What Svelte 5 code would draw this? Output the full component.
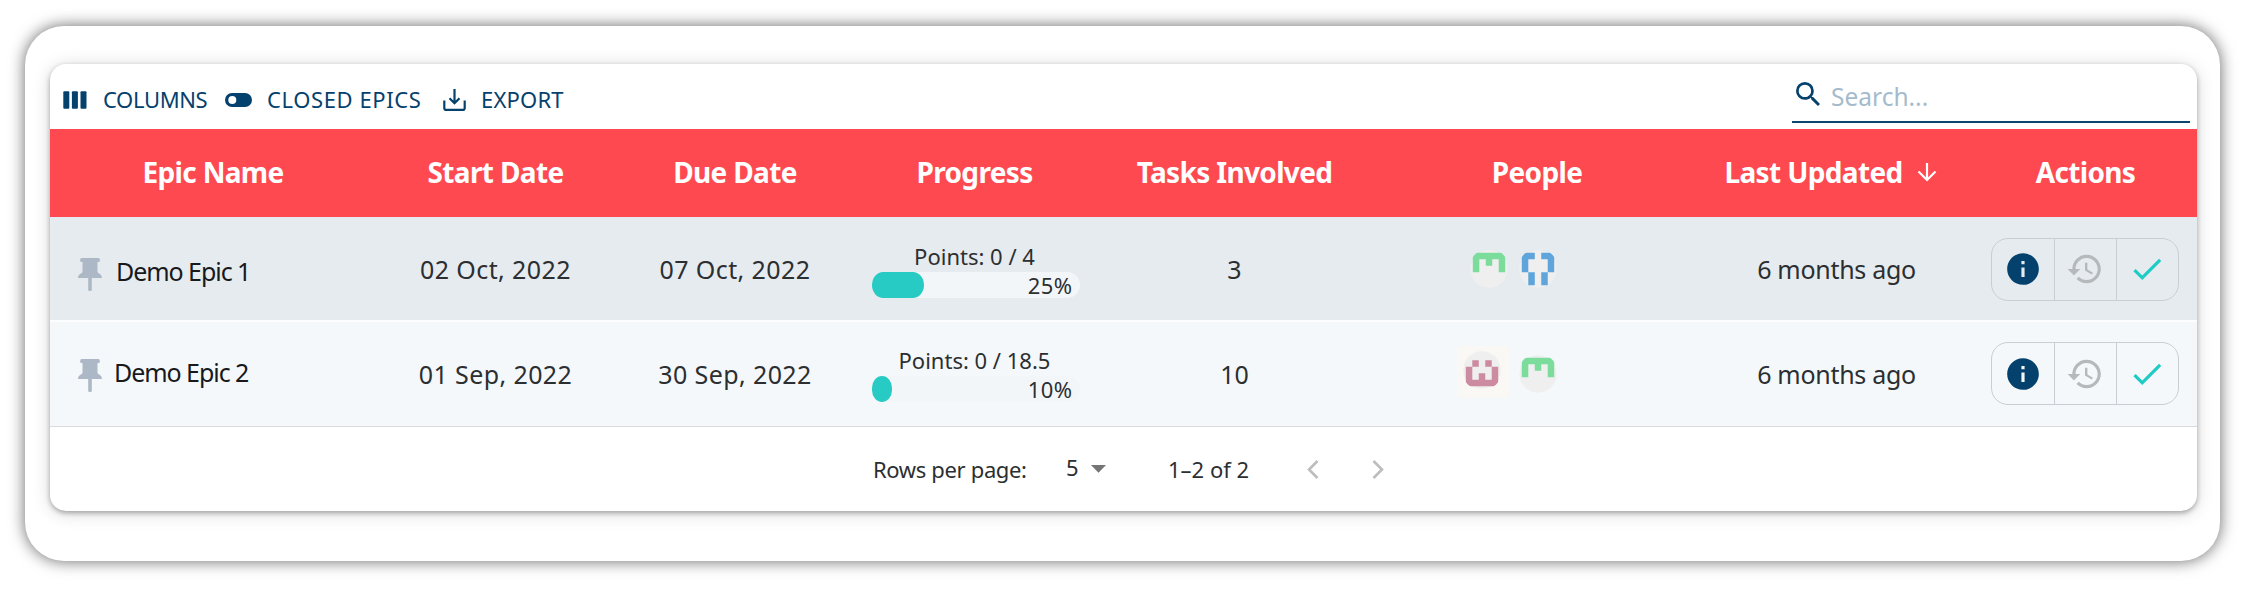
<script lang="ts">
  const columns = ['Epic Name', 'Start Date', 'Due Date', 'Progress', 'Tasks Involved', 'People', 'Last Updated', 'Actions'];

  // Identicons are 5x5 grids, '1' marks a filled cell
  const green = { color: '#7bdc9b', tinted: false, cells: ['11111', '10101', '10001', '00000', '00000'] };
  const blue = { color: '#5fa5dc', tinted: false, cells: ['11011', '10001', '10001', '01010', '01010'] };
  const pink = { color: '#cc8ba0', tinted: true, cells: ['00000', '01010', '10001', '10101', '11111'] };

  let epics = [
    { name: 'Demo Epic 1', start: '02 Oct, 2022', due: '07 Oct, 2022', points: '0 / 4', percent: 25, tasks: 3, people: [green, blue], updated: '6 months ago' },
    { name: 'Demo Epic 2', start: '01 Sep, 2022', due: '30 Sep, 2022', points: '0 / 18.5', percent: 10, tasks: 10, people: [pink, green], updated: '6 months ago' }
  ];

  function cellPath(cells: string[]) {
    let d = '';
    cells.forEach((line, y) => {
      [...line].forEach((cell, x) => {
        if (cell === '1') d += `M${2.8 + x * 6.48} ${2.8 + y * 6.48}h6.5v6.5h-6.5z`;
      });
    });
    return d;
  }
</script>

<div class="page">
  <div class="frame">
    <div class="card">
      <div class="toolbar">
        <div class="tools">
          <button class="tool columns">
            <svg width="24" height="18" viewBox="0 0 24 18" fill="currentColor">
              <rect x="0.300" y="0.300" width="6" height="17.400" rx="1" />
              <rect x="8.900" y="0.300" width="6" height="17.400" rx="1" />
              <rect x="17.500" y="0.300" width="6" height="17.400" rx="1" />
            </svg>
            COLUMNS
          </button>
          <button class="tool closed">
            <svg width="27" height="14" viewBox="0 0 27 14"><path fill-rule="evenodd" d="M7 0h13a7 7 0 0 1 0 14H7A7 7 0 0 1 7 0zm0.300 3a4 4 0 1 0 0 8 4 4 0 0 0 0-8z" fill="currentColor" /></svg>
            CLOSED EPICS
          </button>
          <button class="tool export">
            <svg width="23" height="22" viewBox="0 0 23 22" fill="none" stroke="currentColor" stroke-width="2.200"><path d="M11.500 0v14M6.500 9.300l5 5 5-5M1.300 11.500v7.400q0 2 2 2h16.400q2 0 2-2v-7.400" /></svg>
            EXPORT
          </button>
        </div>
        <label class="search">
          <svg width="24" height="24" viewBox="3 3 17.500 17.500"><path fill="currentColor" d="M15.500 14h-.79l-.28-.27A6.471 6.471 0 0 0 16 9.500 6.500 6.500 0 1 0 9.500 16c1.610 0 3.090-.59 4.230-1.570l.27.28v.79l5 4.990L20.490 19l-4.990-5zm-6 0C7.010 14 5 11.990 5 9.500S7.010 5 9.500 5 14 7.010 14 9.500 11.990 14 9.500 14z" /></svg>
          <input type="text" placeholder="Search..." />
        </label>
      </div>

      <div class="row head">
        {#each columns as column}
          <div class="cell" class:sorted={column === 'Last Updated'}>
            {column}
            {#if column === 'Last Updated'}
              <svg width="20" height="20" viewBox="0 0 20 20" fill="none" stroke="currentColor" stroke-width="2.200"><path d="M10 1v17M1.500 9.500L10 18l8.500-8.500" /></svg>
            {/if}
          </div>
        {/each}
      </div>

      {#each epics as epic}
        <div class="row body">
          <div class="cell name">
            <svg width="24" height="33" viewBox="0 0 24 33" fill="#adb8c6"><path d="M3.500 0h17q1.300 0 1.300 1.500V3q0 1-1 1H19.500v10c.5 1.500 4.500 2 4.500 6H13.800v12q0 1-1.800 1t-1.800-1V20H0c0-4 4-4.500 4.500-6V4H3.200q-1 0-1-1V1.500Q2.200 0 3.500 0z" /></svg>
            {epic.name}
          </div>
          <div class="cell date">{epic.start}</div>
          <div class="cell date">{epic.due}</div>
          <div class="cell progress">
            <div class="points">Points: {epic.points}</div>
            <div class="track">
              <div class="fill" style="width: {epic.percent}%"></div>
              <span class="percent">{epic.percent}%</span>
            </div>
          </div>
          <div class="cell">{epic.tasks}</div>
          <div class="cell people">
            {#each epic.people as person}
              <div class="person" class:tinted={person.tinted}>
                <svg width="38" height="38" viewBox="0 0 38 38">
                  <clipPath id="avatar"><circle cx="19" cy="19" r="20.300" /></clipPath>
                  <circle cx="19" cy="19" r="18.700" fill="#efefef" />
                  <path d={cellPath(person.cells)} fill={person.color} clip-path="url(#avatar)" />
                </svg>
              </div>
            {/each}
          </div>
          <div class="cell updated">{epic.updated}</div>
          <div class="cell last">
            <div class="actions">
              <button class="info" aria-label="Info">
                <svg width="38" height="38" viewBox="0 0 24 24" fill="currentColor"><path d="M12 2C6.480 2 2 6.480 2 12s4.480 10 10 10 10-4.480 10-10S17.520 2 12 2zm1 15h-2v-6h2v6zm0-8h-2V7h2v2z" /></svg>
              </button>
              <button class="history" aria-label="History">
                <svg width="38" height="38" viewBox="0 0 24 24" fill="currentColor"><path d="M13 3c-4.970 0-9 4.030-9 9H1l3.890 3.890.07.14L9 12H6c0-3.870 3.130-7 7-7s7 3.130 7 7-3.130 7-7 7c-1.930 0-3.680-.79-4.940-2.060l-1.420 1.420C8.270 19.990 10.510 21 13 21c4.970 0 9-4.030 9-9s-4.030-9-9-9zm-1 5v5l4.280 2.540.72-1.210-3.500-2.080V8H12z" /></svg>
              </button>
              <button class="done" aria-label="Close epic">
                <svg width="38" height="38" viewBox="0 0 24 24" fill="currentColor"><path d="M9 16.170L4.830 12l-1.420 1.410L9 19 21 7l-1.410-1.410z" /></svg>
              </button>
            </div>
          </div>
        </div>
      {/each}

      <div class="pagination">
        <span class="label">Rows per page:</span>
        <span class="size">5</span>
        <svg width="15" height="8" viewBox="0 0 15 8" fill="#757575"><path d="M0 0h15L7.500 7.700z" /></svg>
        <span>1–2 of 2</span>
        <svg width="12" height="19" viewBox="0 0 12 19" fill="none" stroke="#bdbdbd" stroke-width="2.600"><path d="M10.500 1L2 9.500l8.500 8.500" /></svg>
        <svg width="12" height="19" viewBox="0 0 12 19" fill="none" stroke="#bdbdbd" stroke-width="2.600"><path d="M1.500 1L10 9.500 1.500 18" /></svg>
      </div>
    </div>
  </div>
</div>

<style>
  :global(body) {
    background: #fff;
    font-family: 'Noto Sans', sans-serif;
  }

  .page {
    box-sizing: border-box;
    height: 590px;
    padding: 26px 0 0 25px;
    overflow: hidden;
  }

  .frame {
    box-sizing: border-box;
    width: 2195px;
    height: 535px;
    padding: 38px 0 0 25px;
    border-radius: 39px;
    background: #fff;
    box-shadow: 0 0 16px rgba(0, 0, 0, 0.6);
  }

  .card {
    width: 2147px;
    height: 447px;
    border-radius: 16px;
    overflow: hidden;
    box-shadow: 0 2px 5px rgba(0, 0, 0, 0.3), 0 2px 18px rgba(0, 0, 0, 0.16);
  }

  .toolbar {
    display: flex;
    justify-content: space-between;
    height: 65px;
    padding: 0 7px 0 13px;
    box-sizing: border-box;
    color: #05416d;
  }

  .tools {
    display: grid;
    grid-template-columns: 162px 218px auto;
    padding-top: 5px;
  }

  .tool {
    display: flex;
    align-items: center;
    gap: 16px;
    padding: 0;
    border: 0;
    background: none;
    font: 22px 'Noto Sans', sans-serif;
    color: inherit;
    white-space: nowrap;
  }

  .tool svg {
    margin-top: 1px;
  }

  .columns {
    letter-spacing: -0.35px;
  }

  .closed {
    gap: 15px;
    letter-spacing: 0.6px;
  }

  .export {
    gap: 15px;
    letter-spacing: 0.2px;
  }

  .search {
    display: flex;
    align-items: center;
    gap: 11px;
    box-sizing: border-box;
    width: 398px;
    height: 59px;
    padding: 5px 0 0 4px;
    border-bottom: 2px solid #0b4670;
  }

  .search svg {
    margin-bottom: 3px;
  }

  .search input {
    width: 340px;
    padding: 2px 0 0;
    border: 0;
    outline: 0;
    background: none;
    font: 24.5px 'Noto Sans', sans-serif;
    letter-spacing: 0;
    color: #05416d;
  }

  .search input::placeholder {
    color: #a5bbcc;
    opacity: 1;
  }

  .row {
    display: grid;
    grid-template-columns: 326px 239px 240px 239px 281px 324px 275px 223px;
  }

  .cell {
    display: flex;
    align-items: center;
    justify-content: center;
  }

  .head {
    height: 88px;
    padding-bottom: 2px;
    box-sizing: border-box;
    background: #ff4950;
    color: #fff;
    font-size: 28px;
    font-weight: 700;
    letter-spacing: -0.65px;
  }

  .sorted {
    gap: 14px;
    padding-right: 12px;
  }

  .body {
    box-sizing: border-box;
    height: 105px;
    padding-top: 1px;
    background: #e6ebf0;
    border-bottom: 2px solid #fcfdfe;
    font-size: 25px;
    color: #2c2f31;
  }

  .body + .body {
    padding-top: 0;
    padding-bottom: 1px;
    background: #f4f8fb;
    border-bottom: 1px solid #d9dcde;
  }

  .name {
    justify-content: flex-start;
    gap: 14px;
    padding: 4px 0 0 28px;
    color: #17191b;
    letter-spacing: -1.050px;
  }

  .name svg {
    margin-top: 7px;
  }

  .body + .body .name {
    gap: 12px;
    padding-top: 0;
    padding-bottom: 3px;
  }

  .date {
    letter-spacing: 0.4px;
  }

  .updated {
    letter-spacing: -0.3px;
  }

  .progress {
    flex-direction: column;
    font-size: 22px;
  }

  .points {
    height: 31px;
    line-height: 30px;
  }

  .track {
    display: flex;
    align-items: center;
    justify-content: space-between;
    box-sizing: border-box;
    width: 208px;
    height: 26px;
    margin-left: 2px;
    border-radius: 13px;
    background: #f3f6f9;
  }

  .fill {
    height: 26px;
    border-radius: 12px / 14px;
    background: #28cbc4;
  }

  .percent {
    padding-right: 7px;
    letter-spacing: 0.4px;
    line-height: 26px;
  }

  .people {
    justify-content: flex-start;
    gap: 11px;
    padding-left: 95px;
  }

  .person svg {
    display: block;
  }

  .tinted {
    margin: 0 -2px 3px -13px;
    padding: 5px 9px 9px 6px;
    background: #faf8f5;
  }

  .last {
    padding-right: 2px;
  }

  .actions {
    display: grid;
    grid-template-columns: repeat(3, 1fr);
    box-sizing: border-box;
    width: 188px;
    height: 63px;
    border: 1px solid #c9ced2;
    border-radius: 17px;
  }

  .actions button {
    display: flex;
    align-items: center;
    justify-content: center;
    padding: 0;
    border: 0;
    background: none;
  }

  .actions button + button {
    border-left: 1px solid #c9ced2;
  }

  .actions .info {
    color: #05416d;
  }

  .actions .history {
    color: #b5b9bc;
  }

  .actions .done {
    color: #1fccc5;
  }

  .pagination {
    display: grid;
    grid-template-columns: 193px 25px 77px 139px 65px 20px;
    align-items: center;
    height: 84px;
    padding-left: 823px;
    font-size: 22px;
    color: #2c2f31;
  }

  .label {
    letter-spacing: -0.35px;
  }

  .size {
    padding-bottom: 4px;
  }
</style>
